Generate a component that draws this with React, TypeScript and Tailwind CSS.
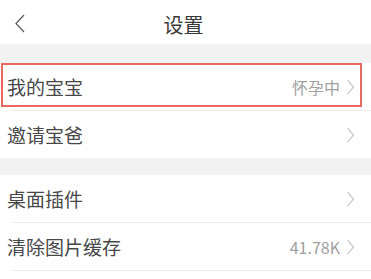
import React from "react";

const Chevron = () => (
  <svg width="9" height="16" viewBox="0 0 9 16" className="ml-[6px]">
    <path d="M1.5 1 L7.5 8 L1.5 15" fill="none" stroke="#b8b8b8" strokeWidth="1.1" />
  </svg>
);

const Row = ({ label, value, highlight }: { label: string; value?: string; highlight?: boolean }) => (
  <div className="relative flex h-[47px] items-center pl-[7px] pr-[16px]">
    <span className="text-[19px] text-[#484848] leading-none">{label}</span>
    <div className="ml-auto flex items-center">
      {value && <span className="text-[16px] text-[#a0a0a0] leading-none">{value}</span>}
      <Chevron />
    </div>
    {highlight && (
      <div className="absolute left-[1px] top-0 h-[44px] w-[361px] border-2 border-[#e8695f]" />
    )}
  </div>
);

const Divider = () => <div className="ml-3 h-px bg-[#ededed]" />;

export default function App() {
  return (
    <div
      className="w-[371px] h-[279px] bg-white overflow-hidden"
      style={{ fontFamily: '"Noto Sans CJK SC", "Noto Sans", sans-serif' }}
    >
      <div className="relative flex h-[44px] items-center justify-center">
        <svg width="12" height="20" viewBox="0 0 12 20" className="absolute left-[14px] top-[14px]">
          <path d="M10 1 L2 9.5 L10 18" fill="none" stroke="#5a5a5a" strokeWidth="1.2" />
        </svg>
        <span className="text-[20px] text-[#3a3a3a] leading-none mt-[6px] -ml-[4px]">设置</span>
      </div>
      <div className="h-[19px] bg-[#f2f2f2]" />
      <Row label="我的宝宝" value="怀孕中" highlight />
      <Divider />
      <Row label="邀请宝爸" />
      <div className="h-[17px] bg-[#f2f2f2]" />
      <Row label="桌面插件" />
      <Divider />
      <Row label="清除图片缓存" value="41.78K" />
      <Divider />
    </div>
  );
}
